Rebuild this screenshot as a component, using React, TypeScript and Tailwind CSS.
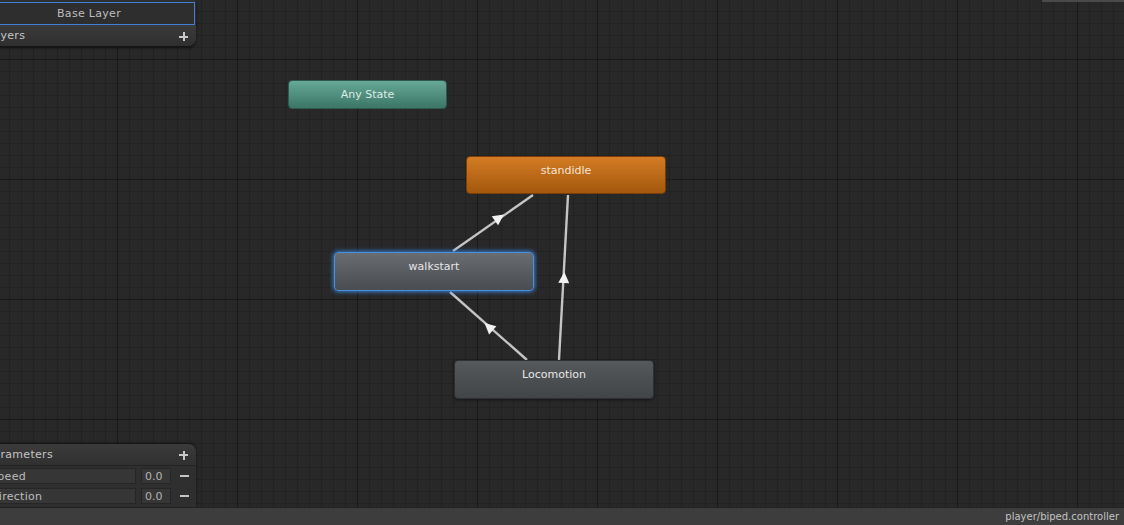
import React from "react";

type StateNode = {
  id: string;
  label: string;
  x: number;
  y: number;
  w: number;
  h: number;
  tone: string;
};

const nodes: StateNode[] = [
  {
    id: "any",
    label: "Any State",
    x: 288,
    y: 80,
    w: 159,
    h: 29,
    tone: "border-[#2d5a4e] bg-gradient-to-b from-[#67a896] to-[#3b7666] text-[#dcebe5]",
  },
  {
    id: "standidle",
    label: "standidle",
    x: 466,
    y: 156,
    w: 200,
    h: 38,
    tone: "border-[#7a3f08] bg-gradient-to-b from-[#d47c24] to-[#a3580c] text-[#f3e4d4]",
  },
  {
    id: "walkstart",
    label: "walkstart",
    x: 334,
    y: 252,
    w: 200,
    h: 39,
    tone: "border-[#4a90e0] bg-gradient-to-b from-[#696c71] to-[#494c51] text-[#e6e6e6] shadow-[0_0_4px_1px_rgba(60,140,230,0.85)]",
  },
  {
    id: "locomotion",
    label: "Locomotion",
    x: 454,
    y: 360,
    w: 200,
    h: 39,
    tone: "border-[#2e3033] bg-gradient-to-b from-[#56595c] to-[#424548] text-[#e6e6e6] shadow-[0_1px_3px_rgba(0,0,0,0.5)]",
  },
];

const transitions = [
  { x1: 453, y1: 251, x2: 533, y2: 195, ax: 499, ay: 218 },
  { x1: 527, y1: 360, x2: 450, y2: 292, ax: 489, ay: 327 },
  { x1: 559, y1: 360, x2: 568, y2: 195, ax: 564, ay: 278 },
];

function TransitionLayer() {
  return (
    <svg className="absolute inset-0 h-full w-full" width={1124} height={507}>
      {transitions.map((t, i) => {
        const angle = (Math.atan2(t.y2 - t.y1, t.x2 - t.x1) * 180) / Math.PI;
        return (
          <g key={i}>
            <line
              x1={t.x1}
              y1={t.y1}
              x2={t.x2}
              y2={t.y2}
              stroke="#c4c4c4"
              strokeWidth={2.4}
            />
            <polygon
              points="6,0 -5,-5.5 -5,5.5"
              fill="#f2f2f2"
              transform={`translate(${t.ax} ${t.ay}) rotate(${angle})`}
            />
          </g>
        );
      })}
    </svg>
  );
}

function PlusIcon() {
  return (
    <span className="relative block h-[9px] w-[9px]">
      <span className="absolute left-0 top-[3.5px] h-[2px] w-[9px] bg-[#c8c8c8]" />
      <span className="absolute left-[3.5px] top-0 h-[9px] w-[2px] bg-[#c8c8c8]" />
    </span>
  );
}

function LayersPanel() {
  return (
    <div className="absolute left-[-20px] top-0 w-[216px] rounded-br-[8px] bg-[#2f2f2f] shadow-[0_2px_3px_rgba(0,0,0,0.55)]">
      <div className="pl-[3px] pr-[1px] pt-[2px]">
        <div className="flex h-[23px] items-center justify-center border border-[#3f7fd6] bg-[#2e2e2e] pt-[1px] text-[11px] tracking-[0.3px] text-[#bdbdbd]">
          Base Layer
        </div>
      </div>
      <div className="flex h-[21px] items-center justify-between rounded-br-[8px] bg-gradient-to-b from-[#3b3b3b] to-[#2f2f2f] pl-[7px] pr-[8px] pt-[2px] text-[11px] text-[#c4c4c4]">
        <span className="tracking-[0.3px]">Layers</span>
        <PlusIcon />
      </div>
    </div>
  );
}

function ParamRow({ name, value }: { name: string; value: string }) {
  return (
    <div className="flex h-[20px] items-center">
      <div className="flex h-[16px] w-[156px] items-center border border-[#262626] bg-[#363636] pl-[9px] pt-[2px] text-[11px] tracking-[0.3px] text-[#bdbdbd]">
        {name}
      </div>
      <div className="ml-[5px] flex h-[16px] w-[30px] items-center border border-[#262626] bg-[#363636] pl-[3px] pt-[2px] text-[11px] text-[#b4b4b4]">
        {value}
      </div>
      <span className="ml-[9px] h-[2px] w-[9px] bg-[#c4c4c4]" />
    </div>
  );
}

function ParametersPanel() {
  return (
    <div className="absolute bottom-0 left-[-20px] w-[216px] rounded-tr-[8px] bg-[#2f2f2f] shadow-[0_-1px_3px_rgba(0,0,0,0.5)]">
      <div className="flex h-[22px] items-center justify-between rounded-tr-[8px] border-b border-[#232323] bg-gradient-to-b from-[#3b3b3b] to-[#303030] pl-[7px] pr-[8px] pt-[1px] text-[11px] text-[#c4c4c4]">
        <span className="tracking-[0.3px]">Parameters</span>
        <PlusIcon />
      </div>
      <div className="pb-[1px]">
        <ParamRow name="Speed" value="0.0" />
        <ParamRow name="Direction" value="0.0" />
      </div>
    </div>
  );
}

export default function App() {
  return (
    <div
      className="flex h-[525px] w-full flex-col overflow-hidden bg-[#282828]"
      style={{ fontFamily: '"DejaVu Sans", Verdana, sans-serif' }}
    >
      <div className="relative flex-1 overflow-hidden bg-[#282828] [background-image:linear-gradient(to_right,#1a1a1a_1px,transparent_1px),linear-gradient(to_bottom,#1a1a1a_1px,transparent_1px),linear-gradient(to_right,#222222_1px,transparent_1px),linear-gradient(to_bottom,#222222_1px,transparent_1px)] [background-size:120px_120px,120px_120px,12px_12px,12px_12px] [background-position:117px_59px]">
        <div className="absolute right-0 top-0 h-[2px] w-[82px] bg-[#4a4a4a]" />

        <TransitionLayer />

        {nodes.map((n) => (
          <div
            key={n.id}
            className={`absolute rounded-[4px] border text-center text-[11px] leading-[14px] ${n.tone}`}
            style={{ left: n.x, top: n.y, width: n.w, height: n.h }}
          >
            <div className="pt-[7px]">{n.label}</div>
          </div>
        ))}

        <LayersPanel />
        <ParametersPanel />
      </div>

      <div className="flex h-[18px] items-center justify-end border-t border-[#222222] bg-[#3d3d3d] pr-[5px] text-[10px] text-[#c2c2c2]">
        player/biped.controller
      </div>
    </div>
  );
}
